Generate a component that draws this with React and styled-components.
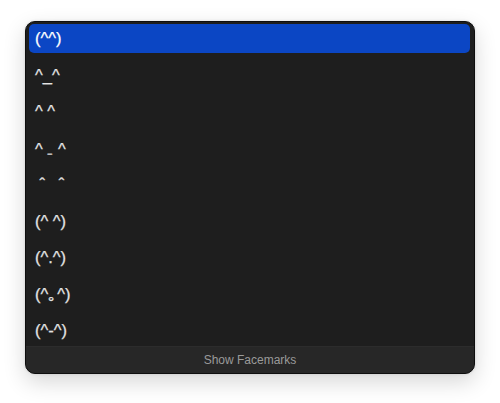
import React from 'react'
import styled, { createGlobalStyle } from 'styled-components'

const GlobalStyle = createGlobalStyle`
  html, body {
    margin: 0;
    padding: 0;
    background: #ffffff;
  }
  body {
    font-family: "Liberation Sans", Arial, sans-serif;
  }
`

const faces = [
  '(^^)',
  '^_^',
  '^ ^',
  '^ \u208B ^',
  ' \u02C6   \u02C6',
  '(^ ^)',
  '(^.^)',
  '(^\uFF61^)',
  '(^-^)',
]

function App() {
  return (
    <>
      <GlobalStyle />
      <Page>
        <Panel>
          <List>
            {faces.map((face, i) => (
              <Row key={i} selected={i === 0}>
                {face}
              </Row>
            ))}
          </List>
          <Footer>Show Facemarks</Footer>
        </Panel>
      </Page>
    </>
  )
}

export default App

const Page = styled.div`
  width: 500px;
  height: 403px;
  padding: 21px 25px 0 25px;
  box-sizing: border-box;
`

const Panel = styled.div`
  width: 450px;
  height: 353px;
  box-sizing: border-box;
  background: #1e1e1e;
  border: 1px solid #0e0e0e;
  border-radius: 10px;
  overflow: hidden;
  display: flex;
  flex-direction: column;
  box-shadow: 0 8px 22px rgba(0, 0, 0, 0.16), 0 0 3px rgba(0, 0, 0, 0.12);
`

const List = styled.div`
  flex: 1;
  display: flex;
  flex-direction: column;
  gap: 7.5px;
  padding: 2px 4px 0 3px;
`

const Row = styled.div`
  height: 29px;
  display: flex;
  align-items: center;
  padding-left: 6px;
  border-radius: 5px;
  font-size: 16.5px;
  white-space: pre;
  -webkit-text-stroke: 0.25px currentColor;
  color: ${(p) => (p.selected ? '#ffffff' : '#e4e4e4')};
  background: ${(p) => (p.selected ? '#0b46c4' : 'transparent')};
`

const Footer = styled.div`
  height: 26px;
  flex-shrink: 0;
  display: flex;
  align-items: center;
  justify-content: center;
  background: #272727;
  border-top: 1px solid #2c2c2c;
  color: #9a9a9a;
  font-size: 12px;
  font-family: "Liberation Sans", Arial, sans-serif;
`
